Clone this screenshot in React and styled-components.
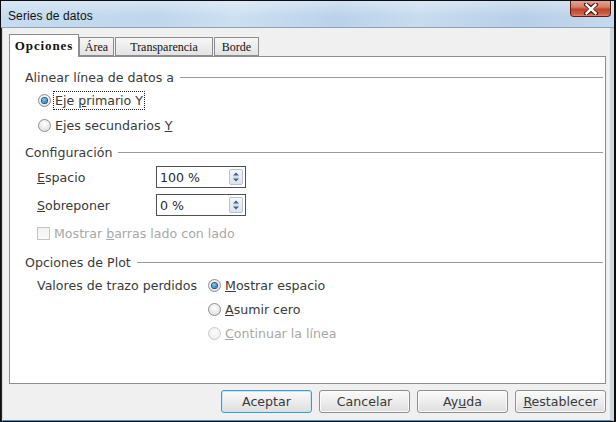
import React from 'react'
import styled, { createGlobalStyle, css } from 'styled-components'

const Global = createGlobalStyle`
  html, body { margin: 0; padding: 0; background: #000; }
  body { width: 616px; height: 422px; overflow: hidden; }
`

const Window = styled.div`
  width: 616px;
  height: 422px;
  box-sizing: border-box;
  display: flex;
  flex-direction: column;
  background: #1c2a36;
  border: 1px solid #0d0d0d;
  border-right-width: 2px;
`

const TitleBar = styled.div`
  height: 26px;
  display: flex;
  align-items: flex-start;
  justify-content: space-between;
  padding-left: 7px;
  padding-right: 3px;
  background:
    linear-gradient(to bottom, rgba(255,255,255,0.35), rgba(255,255,255,0) 60%),
    linear-gradient(100deg, #c7dcf0 0%, #bfd6ec 25%, #cde0f2 38%, #bad2ea 55%, #c8dcef 68%, #b7cfe8 85%, #c5d9ee 100%);
  border-bottom: 1px solid #8ea3b8;
`

const Title = styled.span`
  margin-top: 8px;
  font-family: "Liberation Sans", Arial, sans-serif;
  font-size: 12px;
  color: #111;
  letter-spacing: 0.1px;
`

const CloseButton = styled.div`
  width: 41px;
  height: 16px;
  box-sizing: border-box;
  border: 1px solid #5a1d14;
  border-top: none;
  border-radius: 0 0 4px 4px;
  background: linear-gradient(to bottom, #e3a493 0%, #d5806a 40%, #c2432b 55%, #cf5d45 85%, #de8a72 100%);
  display: flex;
  align-items: center;
  justify-content: center;
`

const Body = styled.div`
  flex: 1;
  display: flex;
  flex-direction: column;
  background: #f0f0f0;
  border-left: 1px solid #d8d8d8;
  border-right: 4px solid #cfd6dc;
  border-bottom: 1px solid #3a9cc4;
  margin-left: 1px;
  padding: 6px 0 0 6px;
  box-sizing: border-box;
`

const TabRow = styled.div`
  display: flex;
  align-items: flex-end;
  height: 22px;
  position: relative;
  z-index: 1;
`

const Tab = styled.div`
  box-sizing: border-box;
  height: ${p => (p.$active ? 23 : 19)}px;
  width: ${p => p.$w}px;
  margin-right: ${p => p.$gap}px;
  border: 1px solid #8d8d8d;
  border-bottom: ${p => (p.$active ? 'none' : '1px solid #8d8d8d')};
  background: ${p => (p.$active ? '#fff' : 'linear-gradient(to bottom, #f7f7f7, #e3e3e3)')};
  font-family: "Liberation Serif", "Times New Roman", serif;
  font-size: ${p => (p.$active ? 13 : 12)}px;
  font-weight: ${p => (p.$active ? 700 : 400)};
  letter-spacing: ${p => (p.$active ? 0.9 : 0)}px;
  color: #111;
  display: flex;
  align-items: center;
  justify-content: center;
  padding-top: ${p => (p.$active ? 0 : 1)}px;
  margin-bottom: ${p => (p.$active ? -1 : 0)}px;
`

const Panel = styled.div`
  width: 597px;
  height: 328px;
  box-sizing: border-box;
  background: #fff;
  border: 1px solid #8d8d8d;
  padding: 10px 2px 0 15px;
  font-family: "DejaVu Sans", "Liberation Sans", sans-serif;
  font-size: 12.6px;
  color: #3a3a3a;
`

const Section = styled.div`
  margin-top: ${p => p.$top || 0}px;
`

const Header = styled.div`
  height: 21px;
  display: flex;
  align-items: center;
  gap: 6px;
  &::after {
    content: '';
    flex: 1;
    height: 1px;
    background: #9a9a9a;
  }
`

const Row = styled.div`
  height: ${p => p.$h}px;
  display: flex;
  align-items: center;
  padding-left: ${p => p.$indent}px;
  color: ${p => (p.$disabled ? '#a8a8a8' : '#3a3a3a')};
`

const Label = styled.span`
  width: ${p => (p.$w ? `${p.$w}px` : 'auto')};
  flex: none;
`

const Focus = styled.span`
  outline: 1px dotted #222;
  outline-offset: 1px;
`

const RadioDot = styled.span`
  width: 13px;
  height: 13px;
  box-sizing: border-box;
  border-radius: 50%;
  flex: none;
  margin-right: 4px;
  border: 1px solid ${p => (p.$disabled ? '#c8c8c8' : '#8e8e8e')};
  background: ${p => (p.$disabled ? 'radial-gradient(circle at 50% 40%, #fbfbfb, #ececec)' : 'radial-gradient(circle at 50% 35%, #ffffff, #d9d9d9)')};
  display: flex;
  align-items: center;
  justify-content: center;
  ${p => p.$on && css`
    &::after {
      content: '';
      width: 5px;
      height: 5px;
      border-radius: 50%;
      background: radial-gradient(circle at 40% 35%, #7fd0ff, #0a5fa8);
      box-shadow: 0 0 0 1px #2a4d6e;
    }
  `}
`

const CheckBox = styled.span`
  width: 13px;
  height: 13px;
  box-sizing: border-box;
  flex: none;
  margin-right: 4px;
  border: 1px solid #c4c4c4;
  background: linear-gradient(to bottom, #f2f2f2, #fafafa);
`

const Spin = styled.div`
  width: 90px;
  height: 22px;
  box-sizing: border-box;
  border: 1px solid #505050;
  background: #fff;
  display: flex;
  align-items: center;
  justify-content: space-between;
  padding: 0 2px 0 3px;
  color: #2a2a2a;
`

const SpinButton = styled.span`
  width: 14px;
  height: 16px;
  box-sizing: border-box;
  border: 1px solid #b9c3cf;
  border-radius: 2px;
  background: linear-gradient(to bottom, #f4f7fa, #dce4ec);
  display: flex;
  align-items: center;
  justify-content: center;
`

const Footer = styled.div`
  flex: 1;
  display: flex;
  align-items: center;
  justify-content: flex-end;
  gap: 7px;
  padding-right: 4px;
  padding-bottom: 1px;
`

const Button = styled.button`
  width: 91px;
  height: 23px;
  box-sizing: border-box;
  border: 1px solid ${p => (p.$default ? '#3d9ad1' : '#8f8f8f')};
  border-radius: 3px;
  background: linear-gradient(to bottom, #fafafa 0%, #ededed 50%, #dedede 100%);
  box-shadow: ${p => (p.$default ? 'inset 0 0 0 1px #c9e6f7' : 'inset 0 0 0 1px #fbfbfb')};
  font-family: "DejaVu Sans", "Liberation Sans", sans-serif;
  font-size: 12.6px;
  color: #3a3a3a;
  padding: 0;
`

const Radio = ({ on, disabled, children }) => (
  <>
    <RadioDot $on={on} $disabled={disabled} />
    <span>{children}</span>
  </>
)

const SpinArrows = () => (
  <SpinButton>
    <svg width="8" height="12" viewBox="0 0 8 12">
      <path d="M4 1.5 L7 4.5 H1 Z" fill="#3d5f8a" />
      <path d="M1 7.5 H7 L4 10.5 Z" fill="#3d5f8a" />
      <line x1="1" y1="6" x2="7" y2="6" stroke="#c4cfdb" strokeWidth="1" />
    </svg>
  </SpinButton>
)

export default function App() {
  return (
    <>
      <Global />
      <Window>
        <TitleBar>
          <Title>Series de datos</Title>
          <CloseButton>
            <svg width="16" height="12" viewBox="0 0 16 12">
              <path d="M3 1.5 L8 5 L13 1.5 M3 10.5 L8 7 L13 10.5" fill="none" stroke="#4a1810" strokeWidth="4.2" strokeLinecap="round" />
              <path d="M3.5 1.8 L12.5 10.2 M12.5 1.8 L3.5 10.2" fill="none" stroke="#fff" strokeWidth="2.4" strokeLinecap="square" />
            </svg>
          </CloseButton>
        </TitleBar>
        <Body>
          <TabRow>
            <Tab $active $w={70} $gap={0}>Opciones</Tab>
            <Tab $w={35} $gap={1}>Área</Tab>
            <Tab $w={98} $gap={1}>Transparencia</Tab>
            <Tab $w={45} $gap={0}>Borde</Tab>
          </TabRow>
          <Panel>
            <Section>
              <Header>Alinear línea de datos a</Header>
              <Row $h={25} $indent={13}>
                <Radio on>
                  <Focus>Eje <u>p</u>rimario Y</Focus>
                </Radio>
              </Row>
              <Row $h={25} $indent={13}>
                <Radio>Ejes secundarios <u>Y</u></Radio>
              </Row>
            </Section>
            <Section $top={4}>
              <Header>Configuración</Header>
              <Row $h={28} $indent={12}>
                <Label $w={119}><u>E</u>spacio</Label>
                <Spin>100 %<SpinArrows /></Spin>
              </Row>
              <Row $h={28} $indent={12}>
                <Label $w={119}><u>S</u>obreponer</Label>
                <Spin>0 %<SpinArrows /></Spin>
              </Row>
              <Row $h={28} $indent={12} $disabled>
                <CheckBox />
                <span>Mostrar <u>b</u>arras lado con lado</span>
              </Row>
            </Section>
            <Section $top={5}>
              <Header>Opciones de Plot</Header>
              <Row $h={24} $indent={12}>
                <Label $w={171}>Valores de trazo perdidos</Label>
                <Radio on><u>M</u>ostrar espacio</Radio>
              </Row>
              <Row $h={24} $indent={183}>
                <Radio><u>A</u>sumir cero</Radio>
              </Row>
              <Row $h={24} $indent={183} $disabled>
                <Radio disabled><u>C</u>ontinuar la línea</Radio>
              </Row>
            </Section>
          </Panel>
          <Footer>
            <Button $default>Aceptar</Button>
            <Button>Cancelar</Button>
            <Button>Ay<u>u</u>da</Button>
            <Button><u>R</u>establecer</Button>
          </Footer>
        </Body>
      </Window>
    </>
  )
}
